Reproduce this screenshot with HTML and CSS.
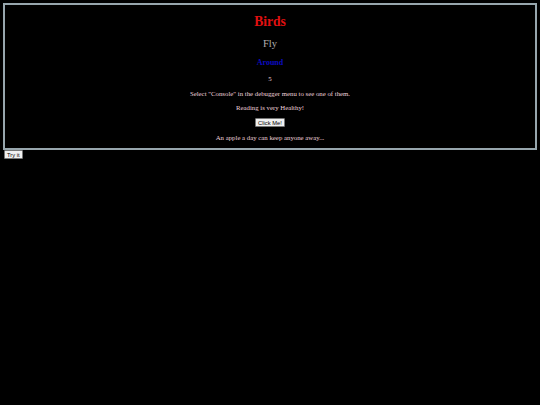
FILE: index.html
```html
<!DOCTYPE html>
<html>
<head>
<meta charset="utf-8">
<link rel="stylesheet" href="styles.css">
</head>
<body>
<div class="box">
  <h1 class="title">Birds</h1>
  <h2 class="sub">Fly</h2>
  <h3 class="around">Around</h3>
  <p class="txt">5</p>
  <p class="txt">Select "Console" in the debugger menu to see one of them.</p>
  <p class="txt">Reading is very Healthy!</p>
  <button class="btn center">Click Me!</button>
  <p class="txt last">An apple a day can keep anyone away...</p>
</div>
<button class="btn try">Try it</button>
</body>
</html>
```
FILE: styles.css
```css
html, body {
  background: #000;
}
body {
  margin: 3px;
  font-family: "Liberation Serif", serif;
  color: #eed2dc;
}
.box {
  border: 2px solid #97a6ad;
  text-align: center;
}
.title {
  color: #e01010;
  font-size: 13.6px;
  line-height: 15.4px;
  margin: 9px 0;
  font-weight: bold;
}
.sub {
  color: #b0b0b0;
  font-size: 10.6px;
  line-height: 11.6px;
  margin: 8.4px 0;
  font-weight: normal;
}
.around {
  color: #0c0cc0;
  font-size: 8px;
  line-height: 9px;
  margin: 7.9px 0;
  font-weight: bold;
}
.txt {
  font-size: 6.8px;
  line-height: 7.7px;
  margin: 6.7px 0;
}
.last {
  margin-bottom: 6.4px;
}
.btn {
  font-family: "Liberation Sans", sans-serif;
  font-size: 5.8px;
  line-height: 6px;
  padding: 1px 2px;
  height: 9px;
  background: #f0f0f0;
  color: #000;
  border: 1px solid #767676;
  border-radius: 1px;
}
.center {
  display: block;
  margin: 0 auto;
}
.try {
  display: block;
  margin-top: 0;
  margin-left: 1px;
  padding: 1px 2px;
}
```
